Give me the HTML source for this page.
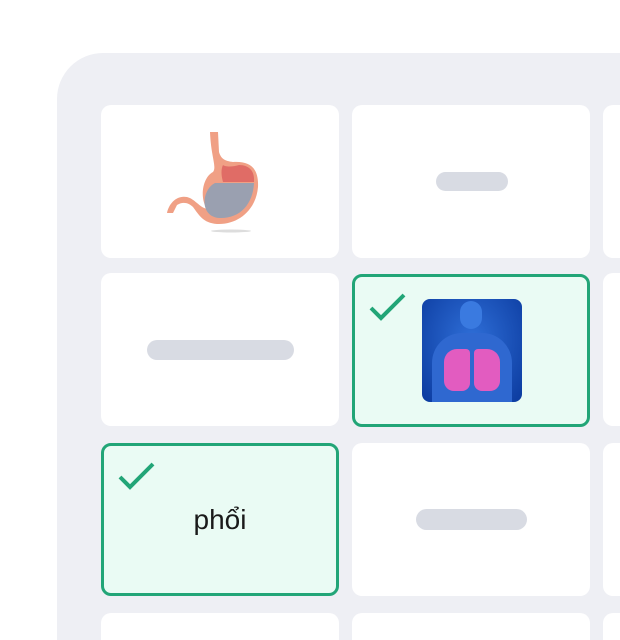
<!DOCTYPE html><html><head><style>
html,body{margin:0;width:620px;height:640px;overflow:hidden}
body{background:#fff;font-family:"Liberation Sans",sans-serif;position:relative}
.panel{position:absolute;left:57px;top:53px;width:563px;height:587px;background:#eeeff4;border-radius:46px 0 0 0}
.c{position:absolute;width:238px;height:153px;background:#fff;border-radius:10px;box-sizing:border-box}
.g{background:#eafbf4;border:3px solid #22a577}
.p{position:absolute;background:#d8dbe3;border-radius:11px}
.ck{position:absolute}
</style></head><body>
<div class="panel"></div>
<div class="c" style="left:101px;top:105px">
<svg style="position:absolute;left:62px;top:22px" width="110" height="110" viewBox="0 0 110 110">
<ellipse cx="68" cy="104" rx="20" ry="1.5" fill="#ddd"/>
<path d="M47 5 L55 5 L56 25 C58 32 62 34 70 35 C86 34 96 40 95 60 C93 84 74 98 54 97 C40 96 36 88 30 80 C26 76 20 74 14 78 L10 86 L4 86 C6 76 14 68 24 70 C32 72 36 80 44 82 C36 70 40 50 50 45 C54 40 48 30 47 5Z" fill="#f0a085"/>
<path d="M60 38 C62 40 70 40 76 38 C86 38 92 44 91 55 L60 55 C58 48 58 42 60 38Z" fill="#e06c66"/>
<path d="M52 56 L91 56 C90 78 76 92 56 91 C44 90 40 80 42 70 C44 62 48 58 52 56Z" fill="#9aa0b0"/>
</svg></div>
<div class="c" style="left:352px;top:105px"><div class="p" style="left:84px;top:67px;width:72px;height:19px"></div></div>
<div class="c" style="left:603px;top:105px;width:17px;border-radius:10px 0 0 10px"></div>
<div class="c" style="left:101px;top:273px"><div class="p" style="left:46px;top:67px;width:147px;height:20px"></div></div>
<div class="c g" style="left:352px;top:274px;height:153px">
<svg class="ck" style="left:13px;top:15px" width="40" height="32" viewBox="0 0 40 32"><path d="M3 16 L13 26 L36 3" fill="none" stroke="#22a577" stroke-width="4"/></svg>
<div style="position:absolute;left:67px;top:22px;width:100px;height:103px;border-radius:8px;background:radial-gradient(ellipse at 50% 40%,#2f6fd8,#0b3a9e);overflow:hidden">
<div style="position:absolute;left:38px;top:2px;width:22px;height:28px;border-radius:11px;background:#3a7ae0"></div>
<div style="position:absolute;left:10px;top:34px;width:80px;height:80px;border-radius:30px 30px 0 0;background:#2f68d0"></div>
<div style="position:absolute;left:22px;top:50px;width:26px;height:42px;border-radius:13px 4px 8px 10px;background:#e25cc0"></div>
<div style="position:absolute;left:52px;top:50px;width:26px;height:42px;border-radius:4px 13px 10px 8px;background:#e25cc0"></div>
</div></div>
<div class="c" style="left:603px;top:273px;width:17px;border-radius:10px 0 0 10px"></div>
<div class="c g" style="left:101px;top:443px">
<svg class="ck" style="left:13px;top:15px" width="40" height="32" viewBox="0 0 40 32"><path d="M3 16 L13 26 L36 3" fill="none" stroke="#22a577" stroke-width="4"/></svg>
<div style="position:absolute;left:0;right:0;top:58px;text-align:center;font-size:28px;color:#1a1a1a">phổi</div></div>
<div class="c" style="left:352px;top:443px"><div class="p" style="left:64px;top:66px;width:111px;height:21px"></div></div>
<div class="c" style="left:603px;top:443px;width:17px;border-radius:10px 0 0 10px"></div>
<div class="c" style="left:101px;top:613px;height:27px;border-radius:10px 10px 0 0"></div>
<div class="c" style="left:352px;top:613px;height:27px;border-radius:10px 10px 0 0"></div>
<div class="c" style="left:603px;top:613px;width:17px;height:27px;border-radius:10px 0 0 0"></div>
</body></html>
